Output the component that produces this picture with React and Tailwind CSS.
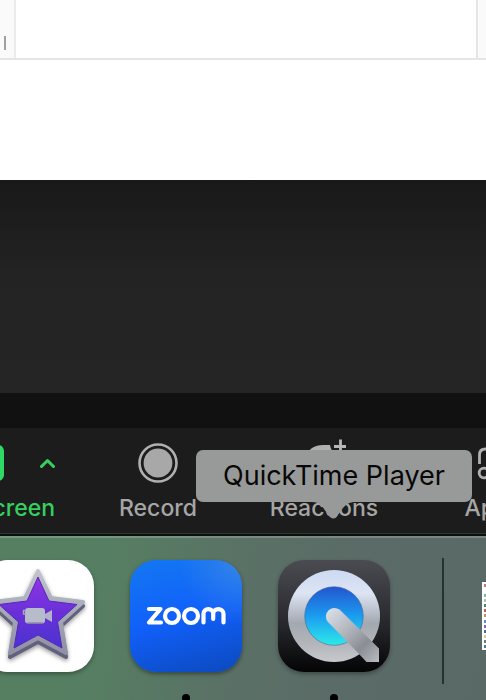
import React from "react";

function DocumentEdge() {
  return (
    <section className="h-[180px] bg-white">
      <div className="flex h-[60px] border-b-2 border-[#e5e5e5]">
        <div className="flex w-4 items-end border-r-2 border-[#ebebeb] bg-[#fafafa] pb-2 pl-1">
          <div className="h-[14px] w-[2px] bg-[#a0a0a0]" />
        </div>
        <div className="flex-1" />
        <div className="w-[10px] border-l-2 border-[#e5e5e5] bg-[#fafafa]" />
      </div>
    </section>
  );
}

function Toolbar() {
  return (
    <nav className="flex h-[105px] overflow-hidden bg-[#1c1c1c] pt-[15px] text-[23px] leading-7 font-medium text-[#a6a6a6]">
      <div className="flex w-[55px] shrink-0 flex-col items-end text-[#35d05f]">
        <div className="flex h-10 items-center gap-[35px]">
          <button aria-label="Share" className="h-9 w-14 rounded-md bg-[#30d965]" />
          <button aria-label="Share options" className="w-4 shrink-0">
            <svg viewBox="0 0 16 12" className="h-3 w-4" fill="none" stroke="currentColor" strokeWidth="3" strokeLinecap="round" strokeLinejoin="round">
              <path d="M2.500 9.500 8.500 3.500 14.500 9.500" />
            </svg>
          </button>
        </div>
        <button className="mt-[11px] whitespace-nowrap">Share Screen</button>
      </div>
      <button className="ml-[63px] flex w-20 shrink-0 flex-col items-center">
        <svg viewBox="0 0 40 40" className="h-10 w-10">
          <circle cx="20" cy="20" r="18.5" fill="none" stroke="#b0b0b0" strokeWidth="2.6" />
          <circle cx="20" cy="20" r="14.4" fill="#a8a8a8" />
        </svg>
        <span className="mt-[11px]">Record</span>
      </button>
      <button className="ml-[70px] flex w-28 shrink-0 flex-col items-center">
        <svg viewBox="0 0 44 44" className="-mt-1 h-11 w-11">
          <path d="M22 41C13 34 5 27 5 18 5 10 13 6 21 6h7c1 5 3 8 8 10h4c1 12-8 18-18 25Z" fill="#b0b0b0" />
          <path d="M38.500 0.500v13M32 7.500h13" fill="none" stroke="#b8b8b8" strokeWidth="2.800" />
        </svg>
        <span className="mt-[11px]">Reactions</span>
      </button>
      <button className="ml-[85px] flex w-14 shrink-0 flex-col items-center">
        <svg viewBox="0 0 32 40" className="h-10 w-8" fill="none" stroke="#b0b0b0" strokeWidth="2.8">
          <path d="M2.500 21V12q0-6 6-6h14q6 0 6 6v9" />
          <circle cx="7" cy="30" r="4.8" />
          <circle cx="25" cy="30" r="4.8" />
        </svg>
        <span className="mt-[11px]">Apps</span>
      </button>
    </nav>
  );
}

function IMovieIcon() {
  return (
    <svg viewBox="0 0 112 112" className="h-28 w-28">
      <defs>
        <linearGradient id="star" x1="0" y1="0" x2="0" y2="1">
          <stop stopColor="#8f35e6" />
          <stop offset="0.5" stopColor="#6a2fd8" />
          <stop offset="1" stopColor="#4a32d2" />
        </linearGradient>
        <linearGradient id="rim" x1="0" y1="0" x2="0" y2="1">
          <stop stopColor="#c2c5cc" />
          <stop offset="0.5" stopColor="#a5a9b8" />
          <stop offset="1" stopColor="#8f90a3" />
        </linearGradient>
        <filter id="starShade" x="-20%" y="-20%" width="140%" height="140%">
          <feDropShadow dx="0" dy="2" stdDeviation="2" floodOpacity="0.4" />
        </filter>
      </defs>
      <rect width="112" height="112" rx="26" fill="#fff" />
      <g filter="url(#starShade)" strokeLinejoin="round">
        <path d="M56 14 69 42 101 46 79 66 84 97 56 82 28 97 33 66 11 46 43 42Z" fill="#62617b" stroke="#62617b" strokeWidth="4" />
        <path d="M56 11 69 38 101 42 79 62 84 93 56 78 28 93 33 62 11 42 43 38Z" fill="url(#rim)" stroke="url(#rim)" strokeWidth="4" />
        <path d="M56 17 67 41 95 44.500 75.500 62 80 88 56 75 32 88 36.500 62 17 44.500 45 41Z" fill="url(#star)" stroke="#5728b6" strokeWidth="1" />
      </g>
      <path d="M62 54.500 70 50V62L62 57.500Z" fill="#b4b2ca" />
      <rect x="43" y="48" width="20" height="15.500" rx="3" fill="#b8bbc9" />
      <path d="M44 50.500h-2.500v3.500H44" fill="none" stroke="#a5a5bf" strokeWidth="1.5" />
      <path d="M45 63h16" stroke="#83809e" strokeWidth="1.2" />
    </svg>
  );
}

function QuickTimeIcon() {
  return (
    <svg viewBox="0 0 112 112" className="h-28 w-28">
      <defs>
        <linearGradient id="qtBack" x1="0" y1="0" x2="0" y2="1">
          <stop stopColor="#4b4c52" />
          <stop offset="0.6" stopColor="#25262a" />
          <stop offset="1" stopColor="#040405" />
        </linearGradient>
        <linearGradient id="metal" x1="0" y1="0" x2="0" y2="1">
          <stop stopColor="#ccdaf2" />
          <stop offset="0.25" stopColor="#dde4f3" />
          <stop offset="0.58" stopColor="#a3a8b1" />
          <stop offset="0.8" stopColor="#b3b5ba" />
          <stop offset="1" stopColor="#c6c8cc" />
        </linearGradient>
        <linearGradient id="lens" x1="0" y1="0" x2="0" y2="1">
          <stop stopColor="#2355cf" />
          <stop offset="0.5" stopColor="#1b9cf0" />
          <stop offset="1" stopColor="#2eeaea" />
        </linearGradient>
        <linearGradient id="tail" gradientUnits="userSpaceOnUse" x1="50" y1="48" x2="100" y2="102">
          <stop stopColor="#dce2ea" />
          <stop offset="0.5" stopColor="#a6a9b0" />
          <stop offset="0.7" stopColor="#8a8d93" />
          <stop offset="1" stopColor="#b7bbc1" />
        </linearGradient>
      </defs>
      <rect width="112" height="112" rx="26" fill="url(#qtBack)" />
      <circle cx="56" cy="56" r="46" fill="url(#metal)" />
      <circle cx="56" cy="56" r="29.3" fill="url(#lens)" stroke="#476a92" strokeWidth="0.6" />
      <path d="M49.500 61.500A8.600 8.600 0 0 1 61.500 49.500L94 81.500l7 7V102H88.500L81.500 94.500Z" fill="url(#tail)" />
    </svg>
  );
}

function Tooltip() {
  return (
    <div role="tooltip" className="absolute bottom-[170px] left-1/2 z-10 flex h-[52px] w-[276px] -translate-x-1/2 items-center justify-center rounded-[7px] bg-[#989a99] text-[27px] leading-8 whitespace-nowrap text-[#080808]">
      QuickTime Player
      <svg viewBox="0 0 44 17" className="absolute top-full left-1/2 h-[17px] w-11 -translate-x-1/2" fill="#989a99">
        <path d="M0 0C8 0 11 5 16 13q6 7 10 0C32 4 35 0 44 0Z" />
      </svg>
    </div>
  );
}

function RunningDot() {
  return <span className="absolute top-[134px] left-1/2 h-2 w-2 -translate-x-1/2 rounded-full bg-black" />;
}

const thumbnailRows = ["#c77", "#fff", "#7b9", "#bbb", "#4a8b62", "#c65b60", "#d58a59", "#5b91ce", "#8865bd", "#466eae", "#ddc79b", "#777", "#477e9c"];

function Dock() {
  return (
    <footer className="flex h-[164px] border-t-2 border-white/20 bg-[linear-gradient(100deg,#557f60_0%,#567e62_22%,#5a7166_48%,#5b6b67_70%,#596965_100%)] pt-[22px]">
      <div className="-ml-[18px] flex shrink-0 gap-9">
        <button aria-label="iMovie" className="h-28 w-28 rounded-[26px] shadow-[0_2px_4px_#0005]">
          <IMovieIcon />
        </button>
        <button className="relative h-28 w-28 rounded-[26px] bg-[radial-gradient(circle_at_100%_0%,#3585e8_0%,transparent_40%),linear-gradient(165deg,#1478f2_0%,#1160fa_50%,#0c49bd_100%)] shadow-[0_2px_4px_#0006]">
          <svg viewBox="0 0 112 112" className="h-28 w-28" fill="none" stroke="#fff" strokeWidth="4.2" strokeLinecap="round" strokeLinejoin="round" role="img" aria-label="Zoom">
            <path d="M19 49H30.500L19 62.500H31" />
            <circle cx="42" cy="56" r="7" />
            <circle cx="61" cy="56" r="7" />
            <path d="M73.500 62.500V54c0-6.500 9.700-6.500 9.700 0v5M83.200 54c0-6.500 10.300-6.500 10.300 0v8.500" />
          </svg>
          <RunningDot />
        </button>
        <div className="relative h-28 w-28">
          <button aria-label="QuickTime Player" className="h-28 w-28 rounded-[26px] shadow-[0_2px_4px_#0005]">
            <QuickTimeIcon />
          </button>
          <Tooltip />
          <RunningDot />
        </div>
      </div>
      <div className="-mt-[2px] ml-[52px] h-[126px] w-[2px] shrink-0 bg-[#223330]" />
      <div className="mt-[22px] ml-[38px] flex h-[68px] w-12 shrink-0 flex-col justify-between bg-white py-[2px] pl-[2px]">
        {thumbnailRows.map((color, index) => (
          <span key={index} className="h-[3px] w-8" style={{ backgroundColor: color }} />
        ))}
      </div>
    </footer>
  );
}

export default function App() {
  return (
    <main className="w-full overflow-hidden bg-[#1c1c1c] font-[Inter,'Liberation_Sans',sans-serif]">
      <DocumentEdge />
      <div className="h-[213px] bg-[linear-gradient(#191919,#232323_45%,#252525)]" />
      <div className="h-[35px] bg-[#111111]" />
      <Toolbar />
      <div className="h-[3px] border-t border-[#293b32] bg-[#0b100e]" />
      <Dock />
    </main>
  );
}
